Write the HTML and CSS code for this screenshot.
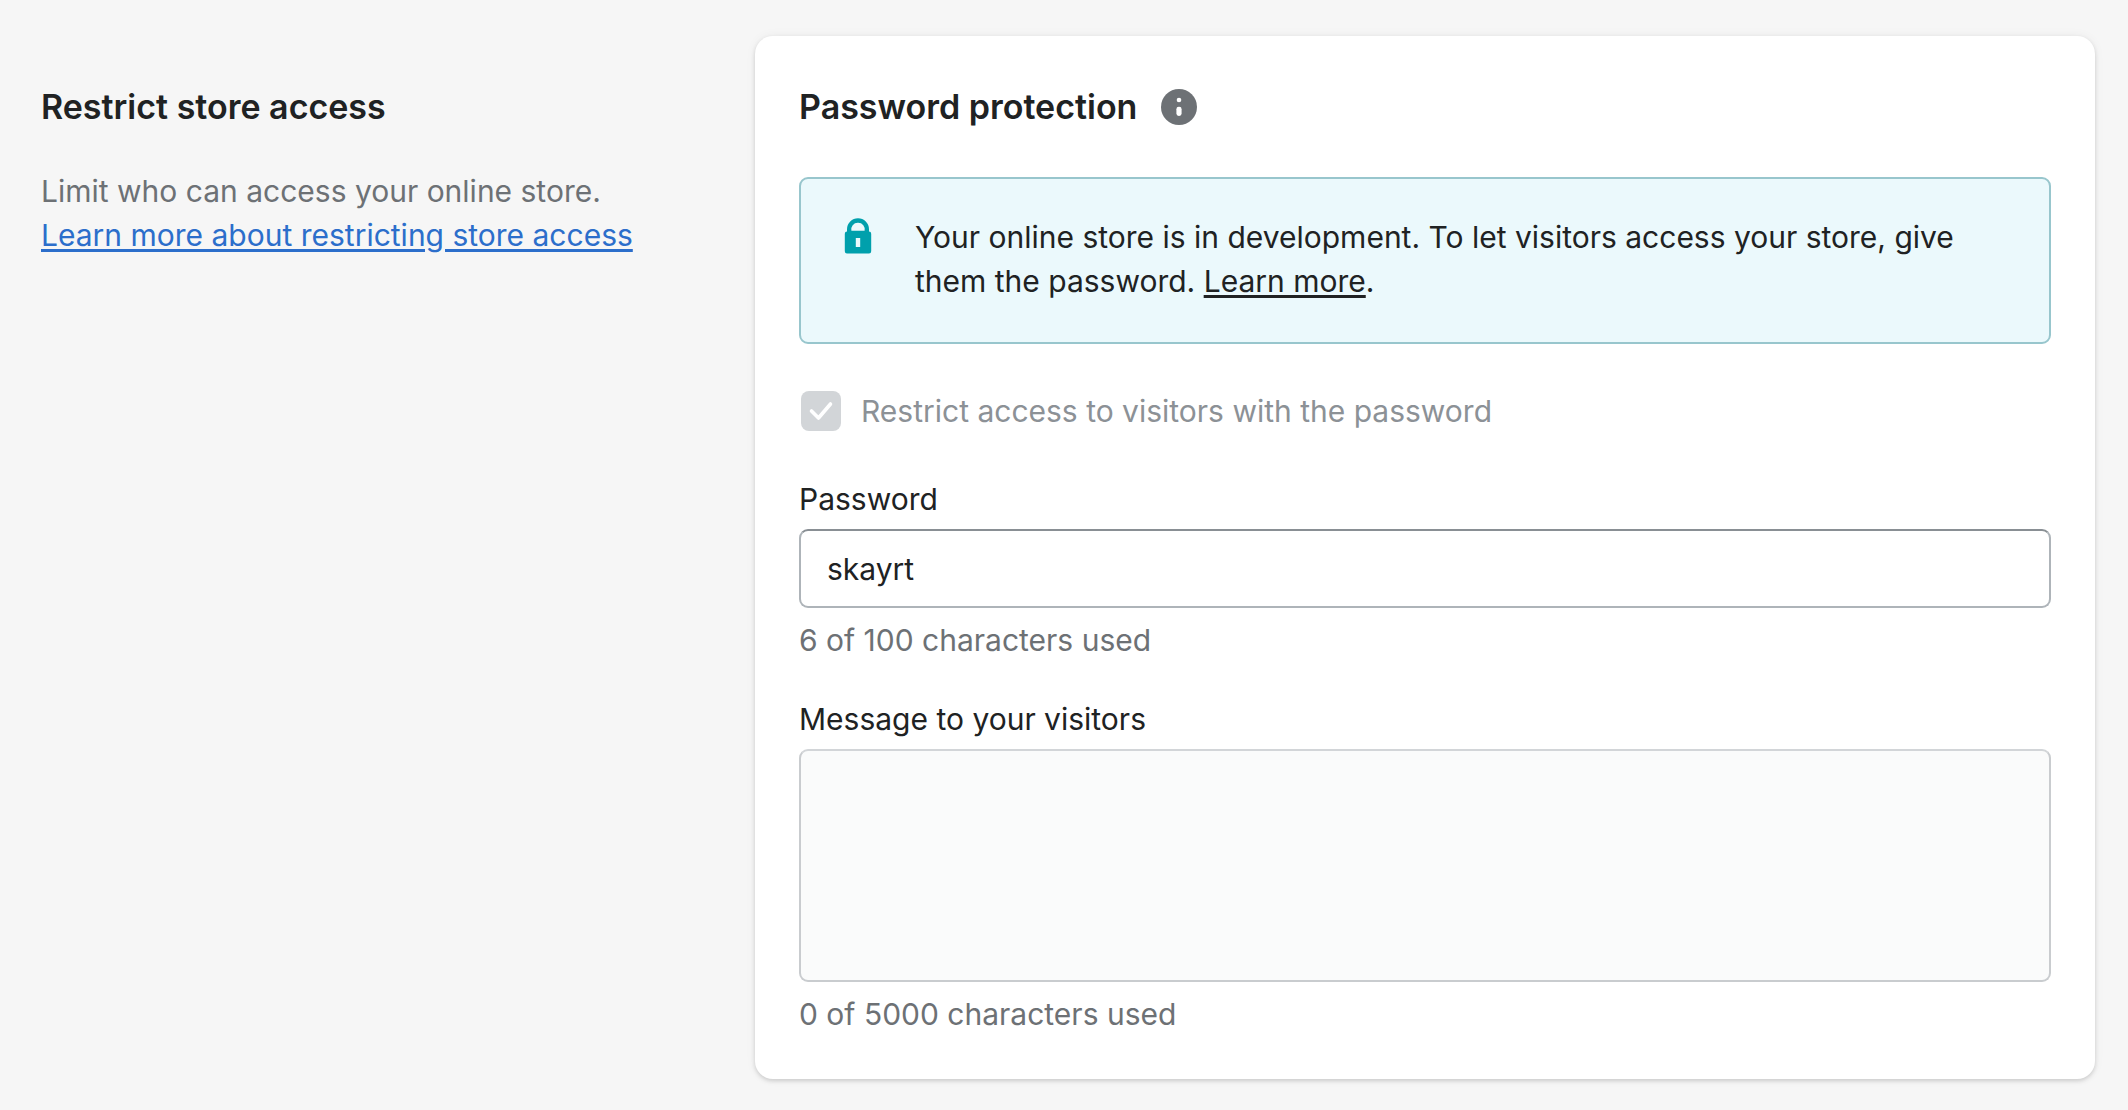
FILE: index.html
```html
<!DOCTYPE html>
<html lang="en">
<head>
<meta charset="utf-8">
<meta name="viewport" content="width=device-width, initial-scale=1">
<title>Restrict store access</title>
<link rel="stylesheet" href="styles.css">
</head>
<body>
<main class="page">
  <section class="intro">
    <h2 class="heading">Restrict store access</h2>
    <p class="intro-text">Limit who can access your online store.<br><a class="link" href="#help">Learn more about restricting store access</a></p>
  </section>
  <section class="card">
    <header class="card-header">
      <h2 class="heading">Password protection</h2>
      <button class="info" type="button" aria-label="More information">
        <svg class="info-icon" viewBox="0 0 36 36" aria-hidden="true">
          <circle cx="18" cy="18" r="18" fill="#6d7175"/>
          <circle cx="18" cy="11" r="2.3" fill="#fff"/>
          <rect x="15.4" y="17.8" width="5.2" height="9.2" rx="2.4" fill="#fff"/>
        </svg>
      </button>
    </header>
    <div class="banner" role="status">
      <svg class="banner-icon" viewBox="0 0.5 20 20" aria-hidden="true">
        <path fill="#00a0ac" fill-rule="evenodd" d="M15 8V7A5 5 0 0 0 5 7v1a1 1 0 0 0-1 1v8a1 1 0 0 0 1 1h10a1 1 0 0 0 1-1V9a1 1 0 0 0-1-1zM10 4a3 3 0 0 1 3 3.700H7A3 3 0 0 1 10 4zM9 11h2v4H9z"/>
      </svg>
      <p class="banner-text">Your online store is in development. To let visitors access your store, give them the password. <a class="banner-link" href="#learn">Learn more</a>.</p>
    </div>
    <label class="choice">
      <span class="choice-control">
        <input class="checkbox" type="checkbox" checked disabled>
        <svg class="check" viewBox="0 0 40 40" aria-hidden="true"><path d="M10.500 20l7 7L29.500 13" fill="none" stroke="#fff" stroke-width="3.600" stroke-linecap="round" stroke-linejoin="round"/></svg>
      </span>
      Restrict access to visitors with the password
    </label>
    <div class="field">
      <label for="password">Password</label>
      <input class="input" id="password" type="text" value="skayrt" maxlength="100" aria-describedby="password-count">
      <p class="hint" id="password-count">6 of 100 characters used</p>
    </div>
    <div class="field">
      <label for="message">Message to your visitors</label>
      <textarea class="input message" id="message" maxlength="5000" disabled aria-describedby="message-count"></textarea>
      <p class="hint" id="message-count">0 of 5000 characters used</p>
    </div>
  </section>
</main>
</body>
</html>
```

FILE: styles.css
```css
* {
  box-sizing: border-box;
}

body {
  margin: 0;
  background: #f6f6f6;
  color: #202223;
  font: 400 30px/44px Inter, "Liberation Sans", sans-serif;
}

h2,
p {
  margin: 0;
}

.page {
  display: grid;
  grid-template-columns: minmax(0, 1fr) minmax(0, 2fr);
  gap: 44px;
  align-items: start;
  padding: 36px 33px 31px 41px;
}

.heading {
  font-size: 34px;
  font-weight: 600;
  line-height: 53px;
}

.intro {
  display: flex;
  flex-direction: column;
  gap: 36px;
  padding-top: 44px;
}

.intro-text,
.hint {
  color: #6d7175;
}

.link,
.banner-link {
  text-decoration-thickness: 3px;
  text-underline-offset: 3px;
}

.link {
  color: #2c6ecb;
}

.banner-link {
  color: inherit;
}

.card {
  padding: 44px 44px 43px;
  border-radius: 18px;
  background: #fff;
  box-shadow: 0 0 11px rgba(23, 24, 24, 0.05), 0 2px 4px rgba(0, 0, 0, 0.15);
}

.card-header {
  display: flex;
  align-items: center;
  gap: 24px;
  margin-bottom: 44px;
}

.info {
  display: flex;
  padding: 0;
  border: 0;
  background: none;
}

.info-icon {
  width: 36px;
  height: 36px;
}

.banner {
  display: flex;
  gap: 35px;
  margin-bottom: 45px;
  padding: 36px 35px 39px;
  border: 2px solid #98c6cd;
  border-radius: 9px;
  background: #ebf9fc;
}

.banner-icon {
  flex: none;
  width: 44px;
  height: 44px;
}

.choice {
  display: flex;
  align-items: center;
  gap: 20px;
  margin-bottom: 44px;
  padding-left: 2px;
  color: #8c9196;
}

.choice-control {
  display: grid;
}

.checkbox,
.check {
  grid-area: 1 / 1;
  width: 40px;
  height: 40px;
  margin: 0;
}

.checkbox {
  appearance: none;
  border-radius: 8px;
  background: #d2d5d8;
}

.field {
  display: flex;
  flex-direction: column;
}

.field + .field {
  margin-top: 35px;
}

.input {
  width: 100%;
  height: 79px;
  margin: 8px 0 10px;
  padding: 0 26px;
  border: 2px solid #aeb4b9;
  border-top-color: #898f94;
  border-radius: 9px;
  background: #fff;
  color: inherit;
  font: inherit;
}

.message {
  height: 233px;
  padding: 16px 26px;
  border-color: #c9cccf;
  border-top-color: #d2d5d8;
  background: #fafbfb;
  resize: none;
}
```
